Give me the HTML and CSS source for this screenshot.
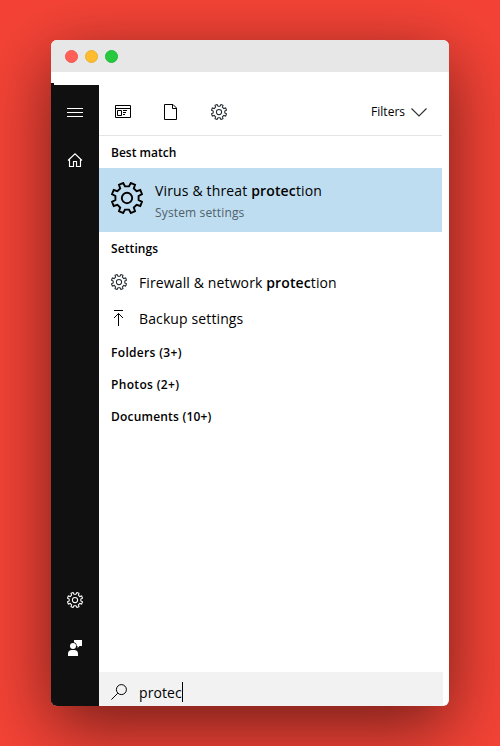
FILE: index.html
```html
<!DOCTYPE html>
<html lang="en">
<head>
<meta charset="utf-8">
<title>Search</title>
<link rel="stylesheet" href="styles.css">
</head>
<body>
<svg class="symbols" aria-hidden="true">
  <symbol id="gear" viewBox="-16 -16 32 32">
    <path d="M-3.8 -15L-2 -11.6H2L3.8 -15L8 -13.3L6.8 -9.6L9.6 -6.8L13.3 -8L15 -3.8L11.6 -2V2L15 3.8L13.3 8L9.6 6.8L6.8 9.6L8 13.3L3.8 15L2 11.6H-2L-3.8 15L-8 13.3L-6.8 9.6L-9.6 6.8L-13.3 8L-15 3.8L-11.6 2V-2L-15 -3.8L-13.3 -8L-9.6 -6.8L-6.8 -9.6L-8 -13.3Z"/>
    <circle r="5.2"/>
  </symbol>
</svg>
<main class="window">
  <header class="titlebar"><i class="dot red"></i><i class="dot yellow"></i><i class="dot green"></i></header>
  <div class="body">
    <nav class="rail">
      <svg class="icon" viewBox="0 0 16 16"><path d="M0 4.5H16M0 8.5H16M0 12.5H16"/></svg>
      <svg class="icon home" viewBox="0 0 16 16"><path d="M1 8.5L8 1.8L15 8.5M2.5 7.3V14.5H6.5V9.5H9.5V14.5H13.5V7.3"/></svg>
      <svg class="icon gear bottom"><use href="#gear"/></svg>
      <svg class="icon person" viewBox="0 0 16 16"><path d="M7 0H15V6H12.5L10.5 8V6H7Z"/><circle class="halo" cx="6" cy="6" r="3.7"/><circle cx="6" cy="6" r="3"/><path d="M1 16V14A4 4 0 0 1 5 10H7A4 4 0 0 1 11 14V16Z"/></svg>
    </nav>
    <section class="panel">
      <div class="toolbar">
        <svg class="icon" viewBox="0 0 16 16"><path d="M.5 1.5H15.5V13.5H.5ZM.5 4.5H15.5M2.5 6.5H6.5V11.5H2.5ZM8 6.5H12M8 8.5H11M8 10.5H10"/></svg>
        <svg class="icon" viewBox="0 0 16 16"><path d="M1.5 .5H10L13.5 4V15.5H1.5ZM9.5 .5V4.5H13.5"/></svg>
        <svg class="icon gear dim"><use href="#gear"/></svg>
        <span class="filters">Filters</span>
        <svg class="icon chevron" viewBox="0 0 16 16"><path d="M.5 4.5L8 12L15.5 4.5"/></svg>
      </div>
      <h2>Best match</h2>
      <div class="best">
        <svg class="big-gear"><use href="#gear"/></svg>
        <div><p class="name">Virus &amp; threat <b>protec</b>tion</p><p class="sub">System settings</p></div>
      </div>
      <h2 class="settings">Settings</h2>
      <p class="row"><svg class="icon gear dim"><use href="#gear"/></svg><span>Firewall &amp; network <b>protec</b>tion</span></p>
      <p class="row"><svg class="icon" viewBox="0 0 16 16"><path d="M3 .5H12M7.5 16V3.5M3 8L7.5 3.5L12 8"/></svg><span>Backup settings</span></p>
      <h2 class="count">Folders (3+)</h2>
      <h2 class="count">Photos (2+)</h2>
      <h2 class="count documents">Documents (10+)</h2>
      <div class="search">
        <svg class="icon" viewBox="0 0 16 16"><circle cx="10.4" cy="5.6" r="5"/><path d="M6.8 9.2L.4 15.6"/></svg>
        <span>protec</span><i class="caret"></i>
      </div>
    </section>
  </div>
</main>
</body>
</html>
```
FILE: styles.css
```css
* { box-sizing: border-box; }
body {
  margin: 0;
  height: 746px;
  padding-top: 40px;
  overflow: hidden;
  background: #f44336;
  color: #000;
  font-family: "Open Sans", "Noto Sans", sans-serif;
}
.symbols { position: absolute; width: 0; height: 0; }
.window {
  width: 398px;
  height: 666px;
  margin: 0 auto;
  overflow: hidden;
  background: #fff;
  border-radius: 6px;
  box-shadow: 0 20px 68px rgba(0, 0, 0, .55);
}
.titlebar {
  display: flex;
  align-items: center;
  gap: 7px;
  height: 32px;
  padding: 1px 0 0 13.5px;
  background: #e7e7e7;
}
.dot { width: 13px; height: 13px; border-radius: 50%; }
.red { background: #ff5f56; border: 1px solid #f2574e; }
.yellow { background: #ffbd2e; border: 1px solid #eab02c; }
.green { background: #27c93f; border: 1px solid #20ba35; }
.body { display: flex; height: 634px; }
.rail {
  display: flex;
  flex-direction: column;
  align-items: center;
  gap: 32px;
  width: 48px;
  margin-top: 13px;
  padding: 19px 0 50px;
  background: #101010;
  color: #fff;
  box-shadow: -45px -2px 0 #101010;
}
.icon {
  flex: none;
  width: 16px;
  height: 16px;
  fill: none;
  stroke: currentColor;
  stroke-width: 1;
}
.home { stroke-width: 1.15; }
.gear { stroke-width: 2.1; }
.dim { color: #222a30; }
.bottom { margin-top: auto; }
.person { fill: #fff; stroke: none; }
.halo { fill: #101010; }
.panel { display: flex; flex-direction: column; width: 343px; }
.toolbar {
  display: flex;
  align-items: center;
  gap: 32px;
  height: 64px;
  padding: 16px 15px 0 16px;
  border-bottom: 1px solid #e5e5e5;
}
.filters { margin-left: auto; font-size: 12px; }
.chevron { margin-left: -26px; color: #333; stroke-width: 1.2; }
h2 {
  height: 32px;
  margin: 0;
  padding: 1px 12px 0;
  font-size: 12px;
  font-weight: 600;
  line-height: 32px;
}
.settings { letter-spacing: .1px; }
.count { letter-spacing: .33px; }
.documents { letter-spacing: .2px; }
p { margin: 0; }
.best {
  display: flex;
  gap: 12px;
  height: 64px;
  padding: 0 12px;
  background: #bfddf0;
}
.big-gear { width: 32px; height: 32px; margin-top: 14px; fill: none; stroke: #000; stroke-width: 1.9; }
.name { padding-top: 12px; font-size: 14px; line-height: 22px; letter-spacing: .15px; }
.sub { padding-top: 1px; font-size: 12px; line-height: 20px; letter-spacing: .15px; color: #50606a; }
.row {
  display: flex;
  align-items: center;
  gap: 12px;
  height: 36px;
  padding: 0 12px;
  font-size: 14px;
  letter-spacing: .12px;
}
b { font-weight: 600; }
.search {
  display: flex;
  align-items: center;
  height: 34px;
  margin-top: auto;
  padding: 6px 12px 0;
  width: 344px;
  background: #f2f2f2;
  font-size: 14px;
}
.search span { margin-left: 12px; padding-top: 1px; letter-spacing: .08px; }
.caret { width: 1px; height: 20px; background: #000; }
```
